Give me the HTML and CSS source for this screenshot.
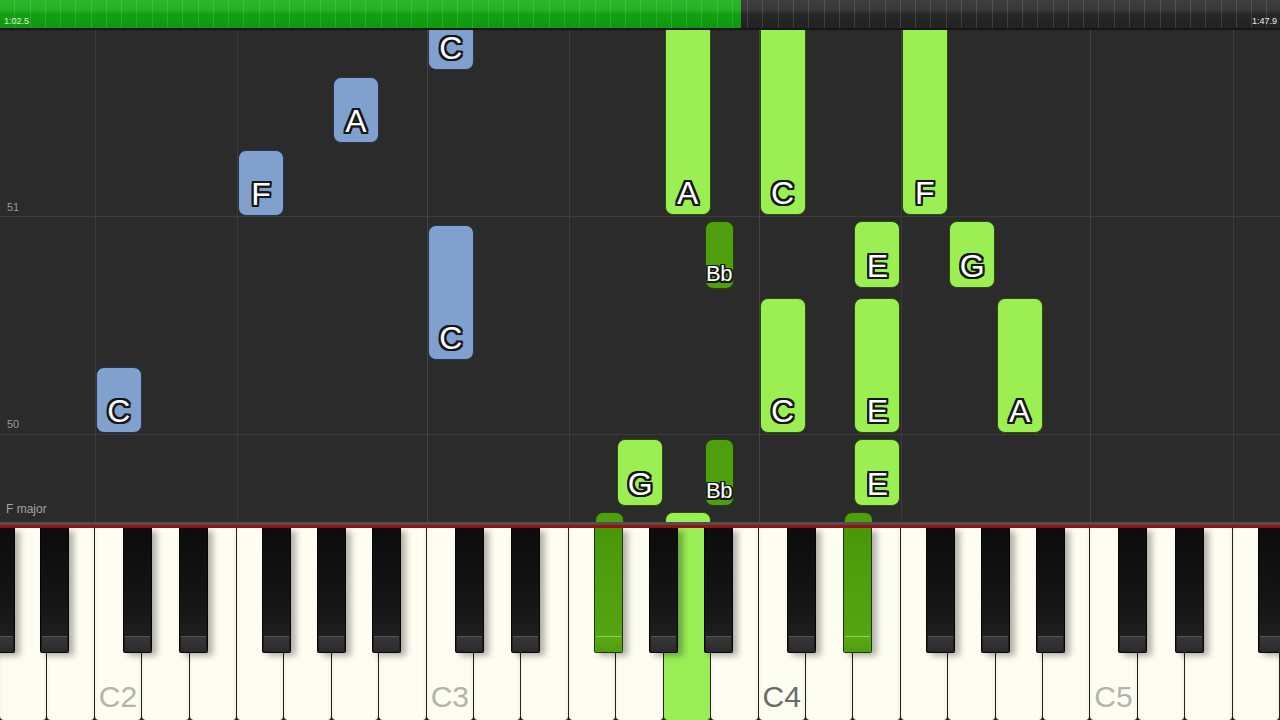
FILE: index.html
```html
<!DOCTYPE html>
<html lang="en">
<head>
<meta charset="utf-8">
<title>Piano roll</title>
<link rel="stylesheet" href="styles.css">
</head>
<body>
<div class="screen">
  <header class="timeline">
    <div class="played" style="width:741px"></div>
    <div class="remaining"></div>
    <span class="time time-start">1:02.5</span>
    <span class="time time-end">1:47.9</span>
  </header>

  <main class="roll">
    <div class="hline" style="top:186px"></div>
    <div class="hline" style="top:404px"></div>
    <div class="vline" style="left:94.8px"></div>
    <div class="vline" style="left:237px"></div>
    <div class="vline c" style="left:426.7px"></div>
    <div class="vline" style="left:568.9px"></div>
    <div class="vline c" style="left:758.6px"></div>
    <div class="vline" style="left:900.8px"></div>
    <div class="vline c" style="left:1090.4px"></div>
    <div class="vline" style="left:1232.7px"></div>

    <span class="measure" style="top:171px">51</span>
    <span class="measure" style="top:388px">50</span>
    <span class="key-sig">F major</span>

    <!-- left hand (blue) -->
    <div class="note blue" style="left:427.7px;top:-40px;height:80px">C</div>
    <div class="note blue" style="left:332.9px;top:47px;height:66px">A</div>
    <div class="note blue" style="left:238px;top:120px;height:66px">F</div>
    <div class="note blue" style="left:427.7px;top:195px;height:135px">C</div>
    <div class="note blue" style="left:95.8px;top:337px;height:66px">C</div>

    <!-- right hand (green) -->
    <div class="note green" style="left:664.7px;top:-30px;height:215px">A</div>
    <div class="note green" style="left:759.6px;top:-30px;height:215px">C</div>
    <div class="note green" style="left:901.8px;top:-30px;height:215px">F</div>
    <div class="note dark" style="left:704.5px;top:191px;height:68px">Bb</div>
    <div class="note green" style="left:854.4px;top:191px;height:67px">E</div>
    <div class="note green" style="left:949.2px;top:191px;height:67px">G</div>
    <div class="note green" style="left:759.6px;top:268px;height:135px">C</div>
    <div class="note green" style="left:854.4px;top:268px;height:135px">E</div>
    <div class="note green" style="left:996.6px;top:268px;height:135px">A</div>
    <div class="note green" style="left:617.3px;top:409px;height:67px">G</div>
    <div class="note dark" style="left:704.5px;top:409px;height:67px">Bb</div>
    <div class="note green" style="left:854.4px;top:409px;height:67px">E</div>
    <div class="note dark" style="left:595px;top:482px;height:60px"></div>
    <div class="note green" style="left:664.7px;top:482px;height:60px"></div>
    <div class="note dark" style="left:843.9px;top:482px;height:60px"></div>
  </main>

  <div class="rail"></div>

  <div class="keyboard">
    <div class="wkey"></div>
    <div class="wkey"></div>
    <div class="wkey"><span class="label">C2</span></div>
    <div class="wkey"></div>
    <div class="wkey"></div>
    <div class="wkey"></div>
    <div class="wkey"></div>
    <div class="wkey"></div>
    <div class="wkey"></div>
    <div class="wkey"><span class="label">C3</span></div>
    <div class="wkey"></div>
    <div class="wkey"></div>
    <div class="wkey"></div>
    <div class="wkey"></div>
    <div class="wkey lit"></div>
    <div class="wkey"></div>
    <div class="wkey"><span class="label dark-label">C4</span></div>
    <div class="wkey"></div>
    <div class="wkey"></div>
    <div class="wkey"></div>
    <div class="wkey"></div>
    <div class="wkey"></div>
    <div class="wkey"></div>
    <div class="wkey"><span class="label">C5</span></div>
    <div class="wkey"></div>
    <div class="wkey"></div>
    <div class="wkey"></div>

    <div class="bkey" style="left:-14.5px"></div>
    <div class="bkey" style="left:40px"></div>
    <div class="bkey" style="left:122.8px"></div>
    <div class="bkey" style="left:178.9px"></div>
    <div class="bkey" style="left:262.4px"></div>
    <div class="bkey" style="left:317.4px"></div>
    <div class="bkey" style="left:371.9px"></div>
    <div class="bkey" style="left:454.6px"></div>
    <div class="bkey" style="left:510.8px"></div>
    <div class="bkey lit" style="left:594.2px"></div>
    <div class="bkey" style="left:649.2px"></div>
    <div class="bkey" style="left:703.8px"></div>
    <div class="bkey" style="left:786.5px"></div>
    <div class="bkey lit" style="left:842.7px"></div>
    <div class="bkey" style="left:926.1px"></div>
    <div class="bkey" style="left:981.1px"></div>
    <div class="bkey" style="left:1035.6px"></div>
    <div class="bkey" style="left:1118.4px"></div>
    <div class="bkey" style="left:1174.5px"></div>
    <div class="bkey" style="left:1258px"></div>
  </div>
</div>
</body>
</html>
```

FILE: styles.css
```css
html, body {
  margin: 0;
  padding: 0;
  background: #2b2b2b;
}

.screen {
  width: 1280px;
  height: 720px;
  overflow: hidden;
  display: flex;
  flex-direction: column;
  font-family: "Liberation Sans", Arial, sans-serif;
}

/* ---------- timeline ---------- */
.timeline {
  position: relative;
  flex: 0 0 28px;
  display: flex;
  border-bottom: 2px solid #151515;
}

.played {
  flex: 0 0 auto;
  background: linear-gradient(#2cb82c 0, #22ad22 11px, #12a012 14px, #0e980e 28px);
}

.remaining {
  flex: 1 1 auto;
  background: linear-gradient(#3f3f3f 0, #363636 11px, #272727 14px, #222 28px);
}

.timeline::after {
  content: "";
  position: absolute;
  inset: 0;
  background: repeating-linear-gradient(90deg, transparent 0 14.27px, rgba(255, 255, 255, 0.12) 14.27px 15.27px);
}

.time {
  position: absolute;
  top: 16px;
  font-size: 9px;
  line-height: 10px;
  color: #ececec;
  z-index: 1;
}

.time-start { left: 4px; }
.time-end { left: 1252px; }

/* ---------- piano roll ---------- */
.roll {
  position: relative;
  flex: 0 0 492px;
  background: #2b2b2b;
  overflow: hidden;
}

.hline {
  position: absolute;
  left: 0;
  right: 0;
  height: 1px;
  background: #3b3b3b;
}

.vline {
  position: absolute;
  top: 0;
  bottom: 0;
  width: 1px;
  background: #3b3b3b;
}

.vline.c { background: #444; }

.measure {
  position: absolute;
  left: 7px;
  font-size: 11px;
  line-height: 13px;
  color: #9a9a9a;
}

.key-sig {
  position: absolute;
  left: 6px;
  top: 472px;
  font-size: 12px;
  line-height: 14px;
  color: #a5a5a5;
}

.note {
  position: absolute;
  box-sizing: border-box;
  width: 46px;
  border-radius: 8px;
  border: 1px solid #1e2a14;
  display: flex;
  align-items: flex-end;
  justify-content: center;
  padding-bottom: 5px;
  font-size: 32px;
  line-height: 32px;
  color: #fff;
  text-shadow:
    -2px -2px 0 #161616, 2px -2px 0 #161616,
    -2px 2px 0 #161616, 2px 2px 0 #161616,
    0 -2px 0 #161616, 0 2px 0 #161616,
    -2px 0 0 #161616, 2px 0 0 #161616,
    -1px -2px 0 #161616, 1px 2px 0 #161616,
    -2px 1px 0 #161616, 2px -1px 0 #161616;
}

.note.blue {
  background: #80a0cd;
  border-color: #26334a;
}

.note.green {
  background: #9bef52;
  border-color: #28500c;
}

.note.dark {
  width: 29px;
  background: #4e9e0d;
  border-color: #21400a;
  font-size: 22px;
  line-height: 22px;
  padding-bottom: 3px;
  letter-spacing: -0.5px;
  text-shadow:
    -1.5px -1.5px 0 #161616, 1.5px -1.5px 0 #161616,
    -1.5px 1.5px 0 #161616, 1.5px 1.5px 0 #161616,
    0 -1.5px 0 #161616, 0 1.5px 0 #161616,
    -1.5px 0 0 #161616, 1.5px 0 0 #161616;
}

/* ---------- rail ---------- */
.rail {
  flex: 0 0 3px;
  background: #505050;
  border-bottom: 3px solid #9a0f16;
}

/* ---------- keyboard ---------- */
.keyboard {
  position: relative;
  flex: 0 0 192px;
  display: flex;
  background: #1e1e1e;
  overflow: hidden;
}

.wkey {
  flex: 0 0 47.41px;
  box-sizing: border-box;
  background: linear-gradient(90deg, #f6f6e8 0, #fdfdf2 8%, #fdfdf2 92%, #f3f3e4 100%);
  border-right: 1.5px solid #222;
  border-radius: 0 0 4px 4px;
  display: flex;
  align-items: flex-end;
  justify-content: center;
}

.wkey.lit {
  background: #99ee55;
}

.label {
  font-size: 30px;
  line-height: 30px;
  padding-bottom: 8px;
  color: #b4b4ac;
}

.label.dark-label {
  color: #6c6c66;
}

.bkey {
  position: absolute;
  top: 0;
  width: 29px;
  height: 125px;
  box-sizing: border-box;
  border: 1px solid #050505;
  border-top: none;
  border-radius: 0 0 2px 2px;
  background: linear-gradient(#0c0c0c 0, #151515 60%, #222 100%);
  box-shadow: 5px 3px 6px rgba(0, 0, 0, 0.3);
}

.bkey::after {
  content: "";
  position: absolute;
  left: 1px;
  right: 1px;
  bottom: 0;
  height: 16px;
  background: linear-gradient(#555 0 1px, #383838 1px, #2a2a2a 100%);
  border-radius: 0 0 2px 2px;
}

.bkey.lit {
  background: linear-gradient(#4a980a 0, #52a210 70%, #58a814 100%);
  border-color: #1d3508;
}

.bkey.lit::after {
  background: linear-gradient(#8ed05a 0 1px, #5aab16 1px, #4f9c10 100%);
}
```
